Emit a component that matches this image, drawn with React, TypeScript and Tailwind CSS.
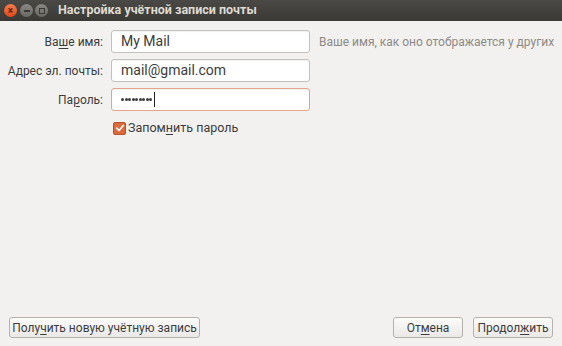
import React from 'react'

const font = { fontFamily: 'Roboto, "Noto Sans", sans-serif' }

function Field({ label, u, rest, value, type = 'text', active = false }: { label: string; u?: [string, string, string]; rest?: string; value: string; type?: string; active?: boolean }) {
  return (
    <div className="flex items-center h-[23px]">
      <label className="shrink-0 w-[104px] text-right pr-[1px] text-[12px] text-[#3c3c3c] whitespace-nowrap">
        {u ? (
          <>
            {u[0]}
            <span className="underline underline-offset-2">{u[1]}</span>
            {u[2]}
          </>
        ) : (
          label
        )}
      </label>
      <div
        className={`shrink-0 ml-[7px] w-[199px] h-[23px] rounded-[3px] border bg-white flex items-center px-[9px] text-[14px] text-[#3c3c3c] shadow-[inset_0_1px_1px_rgba(0,0,0,0.06)] ${
          active ? 'border-[#e5a48a]' : 'border-[#c4c0bb]'
        }`}
      >
        {type === 'password' ? (
          <span className="flex items-center gap-[0.5px]">
            {Array.from({ length: 9 }).map((_, i) => (
              <span key={i} className="w-[3px] h-[3px] rounded-full bg-[#3c3c3c]" />
            ))}
            <span className="ml-[1px] w-px h-[15px] bg-[#222]" />
          </span>
        ) : (
          <span>{value}</span>
        )}
      </div>
      {rest && <span className="ml-[9px] text-[12px] text-[#8d8a86] whitespace-nowrap">{rest}</span>}
    </div>
  )
}

export default function App() {
  return (
    <div className="w-[562px] h-[346px] bg-[#f2f1f0] flex flex-col overflow-hidden" style={font}>
      {/* title bar */}
      <div className="h-[21px] bg-gradient-to-b from-[#4a4945] to-[#3a3935] flex items-center pl-[4px] shrink-0">
        <div className="flex items-center">
          <span className="w-[13px] h-[13px] rounded-full bg-gradient-to-b from-[#f57c4c] to-[#dd4814] flex items-center justify-center text-[#5a2310] text-[10px] leading-none font-bold">×</span>
          <span className="ml-[3px] w-[13px] h-[13px] rounded-full bg-gradient-to-b from-[#8a8882] to-[#6a6863] flex items-center justify-center">
            <span className="w-[6px] h-[2px] bg-[#3a3935]" />
          </span>
          <span className="ml-[2px] w-[13px] h-[13px] rounded-full bg-gradient-to-b from-[#8a8882] to-[#6a6863] flex items-center justify-center">
            <span className="w-[6px] h-[6px] border border-[#3a3935]" />
          </span>
        </div>
        <span className="ml-[10px] text-[12.5px] font-bold text-[#dfdbd2] whitespace-nowrap">Настройка учётной записи почты</span>
      </div>

      {/* form */}
      <div className="flex flex-col gap-[6px] pt-[9px]">
        <Field label="Ваше имя:" u={['Ва', 'ш', 'е имя:']} value="My Mail" rest="Ваше имя, как оно отображается у других" />
        <Field label="Адрес эл. почты:" value="mail@gmail.com" />
        <Field label="Пароль:" u={['Па', 'р', 'оль:']} value="•••••••••" type="password" active />
        <div className="flex items-center pl-[113px] mt-[3px] h-[16px]">
          <span className="w-[13px] h-[13px] rounded-[2px] bg-[#dd6a3c] border border-[#b8532b] flex items-center justify-center">
            <svg viewBox="0 0 12 12" className="w-[10px] h-[10px]">
              <path d="M2 6.2 L4.8 9 L10 3" fill="none" stroke="#fff" strokeWidth="2" strokeLinecap="round" strokeLinejoin="round" />
            </svg>
          </span>
          <span className="ml-[2px] text-[12.5px] text-[#3c3c3c]">
            Запом<span className="underline underline-offset-2">н</span>ить пароль
          </span>
        </div>
      </div>

      <div className="flex-1" />

      {/* bottom buttons */}
      <div className="flex items-center px-[9px] pb-[8px]">
        <button className="h-[21px] w-[191px] rounded-[3px] border border-[#b5b1ac] bg-gradient-to-b from-[#fbfbfa] to-[#ebe9e7] text-[12px] text-[#3c3c3c] leading-none whitespace-nowrap">
          Полу<span className="underline underline-offset-2">ч</span>ить новую учётную запись
        </button>
        <div className="flex-1" />
        <button className="h-[21px] w-[70px] rounded-[3px] border border-[#b5b1ac] bg-gradient-to-b from-[#fbfbfa] to-[#ebe9e7] text-[12px] text-[#3c3c3c] leading-none whitespace-nowrap">
          От<span className="underline underline-offset-2">м</span>ена
        </button>
        <button className="ml-[10px] h-[21px] w-[80px] rounded-[3px] border border-[#b5b1ac] bg-gradient-to-b from-[#fbfbfa] to-[#ebe9e7] text-[12px] text-[#3c3c3c] leading-none whitespace-nowrap">
          Продол<span className="underline underline-offset-2">ж</span>ить
        </button>
      </div>
    </div>
  )
}
